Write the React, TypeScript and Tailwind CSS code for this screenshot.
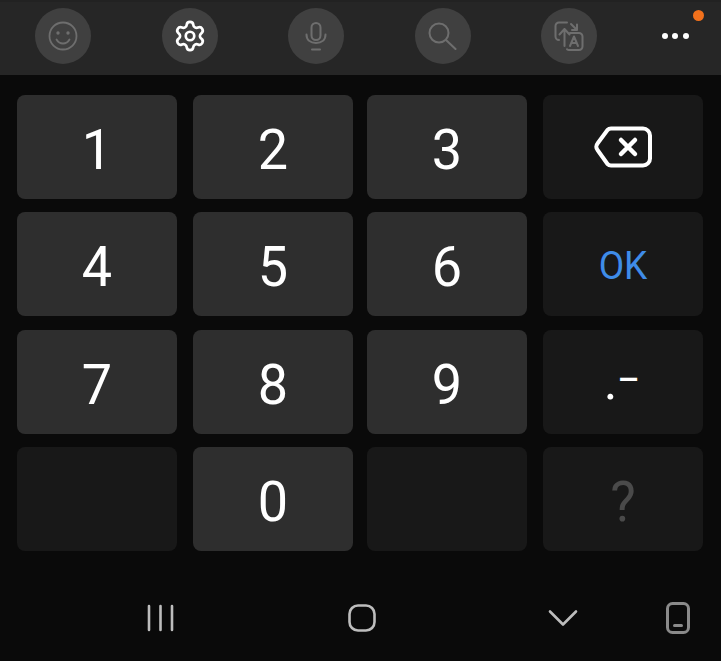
import React from 'react';
import { Settings } from 'lucide-react';

const SmileIcon = () => (
	<svg width="30" height="30" viewBox="0 0 30 30" fill="none" stroke="#6e6e6e" strokeWidth="1.800" strokeLinecap="round">
		<circle cx="15" cy="15" r="13.500" />
		<circle cx="10" cy="12" r="1.700" fill="#6e6e6e" stroke="none" />
		<circle cx="20" cy="12" r="1.700" fill="#6e6e6e" stroke="none" />
		<path d="M8.500 18.500c1.500 2.700 3.800 4 6.500 4s5-1.300 6.500-4" />
	</svg>
);

const MicIcon = () => (
	<svg width="22" height="29" viewBox="0 0 22 29" fill="none" stroke="#6e6e6e" strokeWidth="2" strokeLinecap="round">
		<rect x="6.500" y="1" width="9" height="17" rx="4.500" />
		<path d="M1.500 12.500c0 5.500 3.900 8.500 9.500 8.500s9.500-3 9.500-8.500" />
		<path d="M7 27.500h8" />
	</svg>
);

const SearchIcon = () => (
	<svg width="29" height="28" viewBox="0 0 29 28" fill="none" stroke="#6e6e6e" strokeWidth="2" strokeLinecap="round">
		<circle cx="11" cy="11" r="9.500" />
		<path d="M18 18 L27.500 27" />
	</svg>
);

const TranslateIcon = () => (
	<svg width="30" height="30" viewBox="0 0 30 30" fill="none" stroke="#6e6e6e" strokeWidth="2" strokeLinecap="round" strokeLinejoin="round">
		<path d="M5 19A3.500 3.500 0 0 1 1.500 15.500V5A3.500 3.500 0 0 1 5 1.500H13" />
		<path d="M5.500 13.500L10.500 8l5 5.500M10.500 8v17" />
		<path d="M17 3l6 6M23 3.500v5.500h-5" />
		<path d="M16 12h9a3.500 3.500 0 0 1 3.500 3.500v10a3.500 3.500 0 0 1-3.500 3.500H15a3.500 3.500 0 0 1-2-.8" />
		<path d="M16 25l4-9.500 4 9.500M17.500 22h5" />
	</svg>
);

const BackspaceIcon = () => (
	<svg width="58" height="42" viewBox="0 0 58 42" fill="none" stroke="#ffffff" strokeWidth="4" strokeLinejoin="round" strokeLinecap="round">
		<path d="M17 2.500H49a7 7 0 0 1 7 7v23a7 7 0 0 1-7 7H17a5 5 0 0 1-3.500-1.500L3.500 24a5 5 0 0 1 0-6.500L13.500 4a5 5 0 0 1 3.500-1.500z" />
		<path d="M27 14l14 14M41 14L27 28" strokeWidth="4.500" />
	</svg>
);

const RecentsIcon = () => (
	<svg width="27" height="28" viewBox="0 0 27 28" fill="none" stroke="#bdbdbd" strokeWidth="2.600" strokeLinecap="round">
		<path d="M2 2v24M13.500 2v24M25 2v24" />
	</svg>
);

const HomeIcon = () => (
	<svg width="28" height="28" viewBox="0 0 28 28" fill="none" stroke="#bdbdbd" strokeWidth="2.600">
		<rect x="1.500" y="1.500" width="25" height="25" rx="8.500" />
	</svg>
);

const BackIcon = () => (
	<svg width="30" height="18" viewBox="0 0 30 18" fill="none" stroke="#bdbdbd" strokeWidth="2.600" strokeLinecap="round" strokeLinejoin="round">
		<path d="M2 2.500l13 13 13-13" />
	</svg>
);

const PhoneIcon = () => (
	<svg width="24" height="32" viewBox="0 0 24 32" fill="none" stroke="#8a8a8a" strokeWidth="3">
		<rect x="1.500" y="1.500" width="21" height="29" rx="5" />
		<path d="M8.500 23.500h7" strokeLinecap="round" />
	</svg>
);

const toolIcons = [
	{ id: 'emoji', icon: <SmileIcon /> },
	{ id: 'settings', icon: <Settings size={34} color="#ffffff" strokeWidth={1.900} /> },
	{ id: 'mic', icon: <MicIcon /> },
	{ id: 'search', icon: <SearchIcon /> },
	{ id: 'translate', icon: <TranslateIcon /> },
];

const DigitKey = ({ label }: { label: string }) => (
	<div className="flex h-[104px] w-40 items-center justify-center rounded-lg bg-[#2e2e2e] pt-[5px] text-[54px] text-white">
		<span className="inline-block scale-y-[1.04]">{label}</span>
	</div>
);

const sideKey = 'flex h-[104px] w-40 items-center justify-center rounded-lg bg-[#181818] text-white';

const App: React.FC = () => {
	return (
		<div className="flex h-[661px] w-[721px] flex-col overflow-hidden bg-[#0a0a0a] font-['Roboto',sans-serif]">
			<div className="relative flex h-[75px] shrink-0 items-center gap-[70.500px] border-t-2 border-[#222222] bg-[#262626] pb-[5px] pl-[35px]">
				{toolIcons.map((t) => (
					<div key={t.id} className="flex h-14 w-14 items-center justify-center rounded-full bg-[#404040]">
						{t.icon}
					</div>
				))}
				<div className="-ml-[6px] flex items-center gap-[4.500px]">
					<span className="h-[6px] w-[6px] rounded-full bg-white" />
					<span className="h-[6px] w-[6px] rounded-full bg-white" />
					<span className="h-[6px] w-[6px] rounded-full bg-white" />
				</div>
				<span className="absolute left-[692.500px] top-[7.500px] h-[11px] w-[11px] rounded-full bg-[#f2711c]" />
			</div>

			<div className="grid grid-cols-[176px_174px_176px_160px] grid-rows-[117px_118px_117px_104px] pl-[17px] pt-5">
				<DigitKey label="1" />
				<DigitKey label="2" />
				<DigitKey label="3" />
				<div className={sideKey}>
					<BackspaceIcon />
				</div>
				<DigitKey label="4" />
				<DigitKey label="5" />
				<DigitKey label="6" />
				<div className={`${sideKey} pt-[4px] text-[37px] !text-[#3f8ce8]`}>
					<span className="inline-block scale-y-[1.07]">OK</span>
				</div>
				<DigitKey label="7" />
				<DigitKey label="8" />
				<DigitKey label="9" />
				<div className={`${sideKey} pr-[3px]`}>
					<span className="text-[52px] leading-none">.</span>
					<span className="-translate-y-[3px] text-[34px] font-medium leading-none">–</span>
				</div>
				<div className="h-[104px] w-40 rounded-lg bg-[#181818]" />
				<DigitKey label="0" />
				<div className="h-[104px] w-40 rounded-lg bg-[#181818]" />
				<div className={`${sideKey} pt-[5px] text-[54px] !text-[#4a4a4a]`}>
					<span className="inline-block scale-y-[1.04]">?</span>
				</div>
			</div>

			<div className="flex items-center pt-[51px]">
				<div className="ml-[147px]">
					<RecentsIcon />
				</div>
				<div className="ml-[174px]">
					<HomeIcon />
				</div>
				<div className="ml-[172px]">
					<BackIcon />
				</div>
				<div className="ml-[88px]">
					<PhoneIcon />
				</div>
			</div>
		</div>
	);
};

export default App;
